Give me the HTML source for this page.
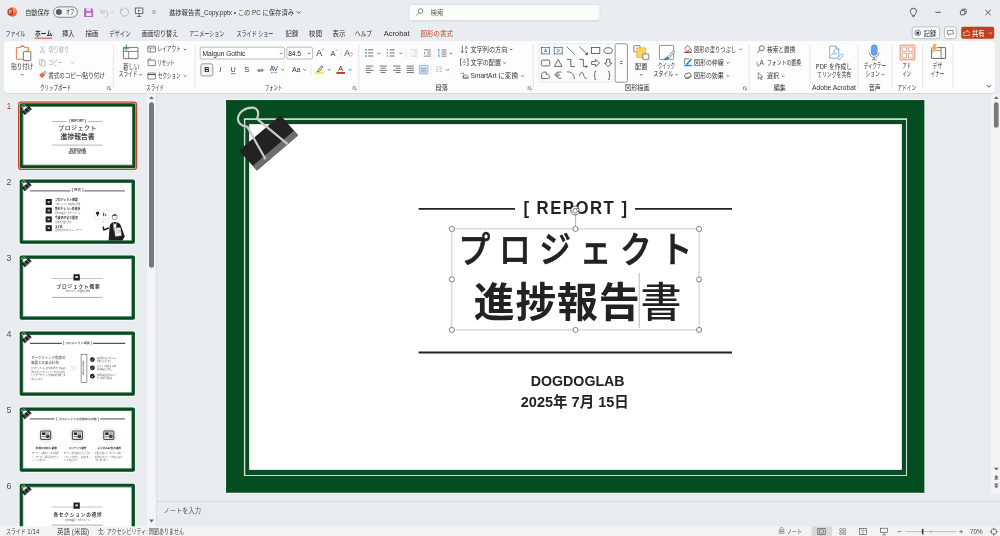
<!DOCTYPE html>
<html lang="ja"><head><meta charset="utf-8"><title>進捗報告書_Copy.pptx - PowerPoint</title>
<style>
html,body{margin:0;padding:0}
body{width:1000px;height:536px;overflow:hidden;position:relative;background:#e8ecef;font-family:"Liberation Sans", "Noto Sans CJK JP", sans-serif;}
.abs{position:absolute}
#titlebar{left:0;top:0;width:1000px;height:41px;background:#e9edf1}
#ribbon{left:4px;top:41px;width:991px;height:52px;background:#fdfdfe;border-radius:4px;box-shadow:0 1px 1px rgba(0,0,0,.07)}
#leftpane{left:0;top:94px;width:147px;height:432px;background:#e9edf0}
#leftscroll{left:147px;top:94px;width:10.4px;height:432px;background:#f3f4f6;border-right:0.6px solid #dde0e4;box-sizing:border-box}
#work{left:157.4px;top:94px;width:834px;height:408px;background:#e8ecef}
#rscroll{left:991.3px;top:94px;width:9px;height:400px;background:#f2f4f6}
#notes{left:157.4px;top:501.4px;width:843px;height:25px;background:#e8ebf0;border-top:1px solid #d6d8dc;box-sizing:border-box}
#status{left:0;top:526px;width:1000px;height:10px;background:#f3f3f3}
#slide{left:226px;top:100px;width:698px;height:393px;background:#054d20}
#paper{left:249.2px;top:123.7px;width:652.7px;height:345.85px;background:#fff;box-shadow:inset 0 0 1.6px rgba(0,0,0,.55)}
#frameline{left:243.9px;top:118.4px;width:663.1px;height:357.6px;border-style:solid;border-color:#d2d6d2;border-width:1.5px 1.1px 1.1px 1.4px;box-sizing:border-box}
svg text{font-family:"Liberation Sans", "Noto Sans CJK JP", sans-serif;}
</style></head><body>
<div class="abs" id="titlebar"></div>
<div class="abs" id="leftpane"></div>
<div class="abs" id="leftscroll"></div>
<div class="abs" id="work"></div>
<div class="abs" id="rscroll"></div>
<div class="abs" id="notes"></div>
<div class="abs" id="status"></div>
<div class="abs" id="ribbon"></div>
<div class="abs" id="slide"></div>
<div class="abs" id="paper"></div>
<svg class="abs" style="left:0;top:0;will-change:transform" width="1000" height="536" viewBox="0 0 1000 536">
<circle cx="12.30" cy="12.00" r="4.60" fill="#d35230" stroke="none" stroke-width="0.8"/>
<path d="M12.3 7.4 A4.6 4.6 0 0 1 16.9 12 L12.3 12 Z" fill="#ff8f6b" stroke="none" stroke-width="0.8" />
<path d="M12.3 16.6 A4.6 4.6 0 0 0 16.9 12 L12.3 12 Z" fill="#ed6c47" stroke="none" stroke-width="0.8" />
<rect x="7.60" y="9.40" width="5.40" height="5.40" fill="#c43e1c" stroke="none" stroke-width="0.8" rx="0.6" />
<text x="9.20" y="12.10" textLength="2.30" lengthAdjust="spacingAndGlyphs" font-size="4.6" fill="#fff" font-weight="700" dominant-baseline="central" >P</text>
<text x="25.20" y="12.00" textLength="24.40" lengthAdjust="spacingAndGlyphs" font-size="6.66" fill="#2f2f2f" font-weight="400" dominant-baseline="central" >自動保存</text>
<rect x="53.60" y="6.90" width="23.80" height="10.40" fill="#f4f5f7" stroke="#5a5a5a" stroke-width="0.7" rx="5.2" />
<circle cx="58.90" cy="12.10" r="3.00" fill="#5e5e5e" stroke="none" stroke-width="0.8"/>
<text x="65.80" y="11.90" textLength="8.60" lengthAdjust="spacingAndGlyphs" font-size="7.01" fill="#2f2f2f" font-weight="400" dominant-baseline="central" >オフ</text>
<path d="M84.6 8.3 h7.2 l1.3 1.3 v6.9 a0.6 0.6 0 0 1 -0.6 0.6 h-7.9 a0.6 0.6 0 0 1 -0.6 -0.6 v-7.6 a0.6 0.6 0 0 1 0.6 -0.6z" fill="#b86bc6" stroke="none" stroke-width="0.8" />
<rect x="86.40" y="8.30" width="4.40" height="2.60" fill="#f3e6f6" stroke="none" stroke-width="0.8" rx="0" />
<rect x="86.20" y="12.80" width="5.20" height="3.20" fill="#f3e6f6" stroke="none" stroke-width="0.8" rx="0" />
<path d="M101 9 v4 h4 M101 13 c2.2 -3.6 6.8 -2.8 6.8 1 c0 2.2 -1.6 3.2 -3.2 4" fill="none" stroke="#b4b7bb" stroke-width="0.9" />
<path d="M111.00 11.55 L112.30 12.85 L113.60 11.55" fill="none" stroke="#b4b7bb" stroke-width="0.75"/>
<path d="M121.4 9.4 a4.1 4.1 0 1 0 3 -1.4 M121.2 7.4 v2.2 h2.2" fill="none" stroke="#b0b3b7" stroke-width="0.9" />
<rect x="135.30" y="8.00" width="7.60" height="5.40" fill="none" stroke="#4a4a4a" stroke-width="0.8" rx="0" />
<line x1="139.10" y1="13.40" x2="139.10" y2="16.20" stroke="#4a4a4a" stroke-width="0.8" />
<line x1="136.90" y1="16.40" x2="141.30" y2="16.40" stroke="#4a4a4a" stroke-width="0.8" />
<path d="M138 9.5 l2.4 1.3 l-2.4 1.3z" fill="#2e8b57" stroke="none" stroke-width="0.8" />
<line x1="152.40" y1="10.80" x2="155.60" y2="10.80" stroke="#555" stroke-width="0.6" />
<path d="M152.70 12.25 L154.00 13.55 L155.30 12.25" fill="none" stroke="#3f3f3f" stroke-width="0.75"/>
<text x="169.00" y="12.10" textLength="125.00" lengthAdjust="spacingAndGlyphs" font-size="6.55" fill="#2f2f2f" font-weight="400" dominant-baseline="central" >進捗報告書_Copy.pptx • この PC に保存済み</text>
<path d="M296.70 11.40 L298.70 13.40 L300.70 11.40" fill="none" stroke="#3a3a3a" stroke-width="0.8"/>
<rect x="409.00" y="4.50" width="191.00" height="16.20" fill="#fbfcfc" stroke="#d6d9dd" stroke-width="0.7" rx="2.6" />
<line x1="411.00" y1="20.80" x2="598.00" y2="20.80" stroke="#c9ccd1" stroke-width="0.5" />
<circle cx="420.60" cy="11.00" r="2.30" fill="none" stroke="#4a4a4a" stroke-width="0.65"/>
<line x1="419.00" y1="12.80" x2="416.40" y2="15.60" stroke="#4a4a4a" stroke-width="0.65" />
<text x="430.60" y="12.30" textLength="13.00" lengthAdjust="spacingAndGlyphs" font-size="6.66" fill="#555" font-weight="400" dominant-baseline="central" >検索</text>
<path d="M910.3 11.3 a3.1 3.1 0 1 1 6.2 0 c0 1.6 -1.6 2.6 -2 4.4 h-2.2 c-0.4 -1.8 -2 -2.8 -2 -4.4z M912.5 16.6 h1.8" fill="none" stroke="#333" stroke-width="0.75" />
<line x1="935.40" y1="12.30" x2="940.80" y2="12.30" stroke="#333" stroke-width="0.8" />
<rect x="960.40" y="10.60" width="4.40" height="4.20" fill="none" stroke="#333" stroke-width="0.8" rx="1" />
<path d="M961.8 10.4 c0 -1 0.4 -1.2 1.2 -1.2 h2.2 c0.8 0 1 0.4 1 1.2 v2.2 c0 0.8 -0.4 1.2 -1.2 1.2" fill="none" stroke="#333" stroke-width="0.8" />
<line x1="985.40" y1="9.80" x2="990.80" y2="15.20" stroke="#333" stroke-width="0.8" />
<line x1="990.80" y1="9.80" x2="985.40" y2="15.20" stroke="#333" stroke-width="0.8" />
<text x="5.60" y="33.30" textLength="19.60" lengthAdjust="spacingAndGlyphs" font-size="7.34" fill="#2f2f2f" font-weight="400" dominant-baseline="central" >ファイル</text>
<text x="62.00" y="33.30" textLength="12.60" lengthAdjust="spacingAndGlyphs" font-size="6.76" fill="#2f2f2f" font-weight="400" dominant-baseline="central" >挿入</text>
<text x="85.60" y="33.30" textLength="13.00" lengthAdjust="spacingAndGlyphs" font-size="6.76" fill="#2f2f2f" font-weight="400" dominant-baseline="central" >描画</text>
<text x="109.20" y="33.30" textLength="21.40" lengthAdjust="spacingAndGlyphs" font-size="7.34" fill="#2f2f2f" font-weight="400" dominant-baseline="central" >デザイン</text>
<text x="141.80" y="33.30" textLength="36.20" lengthAdjust="spacingAndGlyphs" font-size="6.76" fill="#2f2f2f" font-weight="400" dominant-baseline="central" >画面切り替え</text>
<text x="189.20" y="33.30" textLength="35.00" lengthAdjust="spacingAndGlyphs" font-size="7.34" fill="#2f2f2f" font-weight="400" dominant-baseline="central" >アニメーション</text>
<text x="236.40" y="33.30" textLength="37.00" lengthAdjust="spacingAndGlyphs" font-size="7.34" fill="#2f2f2f" font-weight="400" dominant-baseline="central" >スライド ショー</text>
<text x="285.60" y="33.30" textLength="12.60" lengthAdjust="spacingAndGlyphs" font-size="6.76" fill="#2f2f2f" font-weight="400" dominant-baseline="central" >記録</text>
<text x="308.80" y="33.30" textLength="13.20" lengthAdjust="spacingAndGlyphs" font-size="6.76" fill="#2f2f2f" font-weight="400" dominant-baseline="central" >校閲</text>
<text x="332.60" y="33.30" textLength="13.00" lengthAdjust="spacingAndGlyphs" font-size="6.76" fill="#2f2f2f" font-weight="400" dominant-baseline="central" >表示</text>
<text x="355.00" y="33.30" textLength="17.00" lengthAdjust="spacingAndGlyphs" font-size="7.34" fill="#2f2f2f" font-weight="400" dominant-baseline="central" >ヘルプ</text>
<text x="383.80" y="33.30" textLength="25.80" lengthAdjust="spacingAndGlyphs" font-size="6.76" fill="#2f2f2f" font-weight="400" dominant-baseline="central" >Acrobat</text>
<text x="35.00" y="33.30" textLength="17.20" lengthAdjust="spacingAndGlyphs" font-size="7.34" fill="#222" font-weight="700" dominant-baseline="central" >ホーム</text>
<line x1="35.00" y1="38.20" x2="52.20" y2="38.20" stroke="#c43e1c" stroke-width="0.9" />
<text x="420.60" y="33.30" textLength="32.40" lengthAdjust="spacingAndGlyphs" font-size="6.76" fill="#c43e1c" font-weight="400" dominant-baseline="central" >図形の書式</text>
<rect x="912.20" y="26.90" width="27.40" height="11.80" fill="#fcfcfd" stroke="#9a9da1" stroke-width="0.6" rx="1.8" />
<circle cx="917.80" cy="32.90" r="2.80" fill="none" stroke="#3a3a3a" stroke-width="0.65"/>
<circle cx="917.80" cy="32.90" r="1.50" fill="#3a3a3a" stroke="none" stroke-width="0.8"/>
<text x="923.80" y="33.00" textLength="12.20" lengthAdjust="spacingAndGlyphs" font-size="6.55" fill="#222" font-weight="400" dominant-baseline="central" >記録</text>
<rect x="944.60" y="26.90" width="11.60" height="11.80" fill="#fcfcfd" stroke="#9a9da1" stroke-width="0.6" rx="1.8" />
<path d="M947.6 30.4 h5.6 v3.6 h-3.4 l-1.2 1.2 v-1.2 h-1z" fill="none" stroke="#444" stroke-width="0.6" />
<rect x="961.20" y="26.80" width="33.00" height="12.00" fill="#c43e1c" stroke="none" stroke-width="0.8" rx="2" />
<path d="M963.6 32.4 h1.6 l2.4 -2.2 v1.4 c1.4 0 2 0.6 2 1.6 M963.6 32.4 v3.2 h5.6 v-1.6" fill="none" stroke="#fff" stroke-width="0.6" />
<text x="972.00" y="33.00" textLength="12.60" lengthAdjust="spacingAndGlyphs" font-size="6.76" fill="#fff" font-weight="500" dominant-baseline="central" >共有</text>
<path d="M989.00 32.50 L990.40 33.90 L991.80 32.50" fill="none" stroke="#fff" stroke-width="0.75"/>
<line x1="113.30" y1="44.50" x2="113.30" y2="89.00" stroke="#d9dbde" stroke-width="0.7" />
<line x1="195.00" y1="44.50" x2="195.00" y2="89.00" stroke="#d9dbde" stroke-width="0.7" />
<line x1="358.80" y1="44.50" x2="358.80" y2="89.00" stroke="#d9dbde" stroke-width="0.7" />
<line x1="533.20" y1="44.50" x2="533.20" y2="89.00" stroke="#d9dbde" stroke-width="0.7" />
<line x1="749.20" y1="44.50" x2="749.20" y2="89.00" stroke="#d9dbde" stroke-width="0.7" />
<line x1="810.00" y1="44.50" x2="810.00" y2="89.00" stroke="#d9dbde" stroke-width="0.7" />
<line x1="858.00" y1="44.50" x2="858.00" y2="89.00" stroke="#d9dbde" stroke-width="0.7" />
<line x1="891.80" y1="44.50" x2="891.80" y2="89.00" stroke="#d9dbde" stroke-width="0.7" />
<line x1="922.60" y1="44.50" x2="922.60" y2="89.00" stroke="#d9dbde" stroke-width="0.7" />
<line x1="953.00" y1="44.50" x2="953.00" y2="89.00" stroke="#d9dbde" stroke-width="0.7" />
<path d="M16.4 47.6 h3.4 l1.2 -1.4 h3 l1.2 1.4 h3.2 v4 M16.4 47.6 v11.6 h6.4" fill="none" stroke="#e0703c" stroke-width="0.9" />
<path d="M20.4 47.8 l2.1 -2.4 l2.1 2.4" fill="none" stroke="#666" stroke-width="0.7" />
<rect x="23.40" y="51.60" width="7.40" height="9.00" fill="#fff" stroke="#555" stroke-width="0.8" rx="0.5" />
<line x1="26.80" y1="49.20" x2="26.80" y2="51.40" stroke="#f0c419" stroke-width="1" />
<text x="11.20" y="66.80" textLength="22.00" lengthAdjust="spacingAndGlyphs" font-size="6.55" fill="#2f2f2f" font-weight="400" dominant-baseline="central" >貼り付け</text>
<path d="M21.10 73.95 L22.40 75.25 L23.70 73.95" fill="none" stroke="#3f3f3f" stroke-width="0.75"/>
<path d="M40.6 46.4 l3.6 5.4 M44.4 46.4 l-3.6 5.4" fill="none" stroke="#a9a9a9" stroke-width="0.7" />
<circle cx="41.00" cy="52.40" r="0.80" fill="none" stroke="#a9a9a9" stroke-width="0.5"/>
<circle cx="44.00" cy="52.40" r="0.80" fill="none" stroke="#a9a9a9" stroke-width="0.5"/>
<text x="48.20" y="49.20" textLength="21.20" lengthAdjust="spacingAndGlyphs" font-size="6.55" fill="#a9a9a9" font-weight="400" dominant-baseline="central" >切り取り</text>
<rect x="39.40" y="59.60" width="3.60" height="5.40" fill="none" stroke="#a9a9a9" stroke-width="0.7" rx="0.4" />
<rect x="41.40" y="61.00" width="3.80" height="5.20" fill="#fdfdfe" stroke="#a9a9a9" stroke-width="0.7" rx="0.4" />
<text x="48.20" y="62.60" textLength="13.80" lengthAdjust="spacingAndGlyphs" font-size="7.12" fill="#a9a9a9" font-weight="400" dominant-baseline="central" >コピー</text>
<path d="M71.30 62.15 L72.60 63.45 L73.90 62.15" fill="none" stroke="#a9a9a9" stroke-width="0.75"/>
<path d="M39.6 74.2 l3 -1.6 l2.4 2.4 l-2 2.6 l-1.4 0.2 l-2 -2z" fill="#e0703c" stroke="none" stroke-width="0.8" />
<path d="M43 73 l2.2 -1.6 l1 1 l-1.6 2.2" fill="none" stroke="#555" stroke-width="0.7" />
<text x="48.20" y="75.80" textLength="56.60" lengthAdjust="spacingAndGlyphs" font-size="6.55" fill="#2f2f2f" font-weight="400" dominant-baseline="central" >書式のコピー/貼り付け</text>
<text x="40.20" y="87.70" textLength="31.00" lengthAdjust="spacingAndGlyphs" font-size="7.01" fill="#2f2f2f" font-weight="400" dominant-baseline="central" >クリップボード</text>
<path d="M107.8 87.0 h-0 M107.7 89.9 v-3 h3" fill="none" stroke="#4a4a4a" stroke-width="0.6" />
<path d="M109.0 88.2 l1.6 1.6 M110.7 88.5 v1.4 h-1.4" fill="none" stroke="#4a4a4a" stroke-width="0.6" />
<rect x="123.40" y="47.40" width="14.60" height="11.20" fill="none" stroke="#6a6a6a" stroke-width="0.9" rx="0.5" />
<line x1="123.40" y1="51.40" x2="138.00" y2="51.40" stroke="#6a6a6a" stroke-width="0.8" />
<line x1="128.60" y1="51.40" x2="128.60" y2="58.60" stroke="#6a6a6a" stroke-width="0.8" />
<line x1="126.30" y1="44.40" x2="126.30" y2="51.00" stroke="#2e8b57" stroke-width="0.9" />
<line x1="122.80" y1="48.20" x2="129.60" y2="48.20" stroke="#2e8b57" stroke-width="0.9" />
<text x="123.20" y="66.20" textLength="16.20" lengthAdjust="spacingAndGlyphs" font-size="6.55" fill="#2f2f2f" font-weight="400" dominant-baseline="central" >新しい</text>
<text x="118.80" y="74.20" textLength="18.60" lengthAdjust="spacingAndGlyphs" font-size="7.12" fill="#2f2f2f" font-weight="400" dominant-baseline="central" >スライド</text>
<path d="M139.30 73.95 L140.60 75.25 L141.90 73.95" fill="none" stroke="#3f3f3f" stroke-width="0.75"/>
<rect x="147.80" y="46.20" width="7.60" height="5.80" fill="none" stroke="#555" stroke-width="0.7" rx="0.3" />
<line x1="147.80" y1="48.00" x2="155.40" y2="48.00" stroke="#555" stroke-width="0.6" />
<line x1="150.40" y1="48.00" x2="150.40" y2="52.00" stroke="#555" stroke-width="0.6" />
<text x="157.60" y="49.20" textLength="23.20" lengthAdjust="spacingAndGlyphs" font-size="7.12" fill="#2f2f2f" font-weight="400" dominant-baseline="central" >レイアウト</text>
<path d="M183.70 48.75 L185.00 50.05 L186.30 48.75" fill="none" stroke="#3f3f3f" stroke-width="0.75"/>
<rect x="148.20" y="60.20" width="7.20" height="5.40" fill="none" stroke="#555" stroke-width="0.7" rx="0.3" />
<path d="M147.6 60.6 a2 2 0 0 1 2.6 -1.6 M150.4 58 v1.2 h-1.2" fill="none" stroke="#2b7cd3" stroke-width="0.6" />
<text x="157.60" y="62.60" textLength="17.00" lengthAdjust="spacingAndGlyphs" font-size="7.12" fill="#2f2f2f" font-weight="400" dominant-baseline="central" >リセット</text>
<rect x="147.80" y="73.00" width="7.60" height="6.00" fill="none" stroke="#555" stroke-width="0.7" rx="0.3" />
<line x1="147.80" y1="74.60" x2="155.40" y2="74.60" stroke="#555" stroke-width="1.1" />
<text x="158.00" y="75.80" textLength="22.40" lengthAdjust="spacingAndGlyphs" font-size="7.12" fill="#2f2f2f" font-weight="400" dominant-baseline="central" >セクション</text>
<path d="M183.70 75.35 L185.00 76.65 L186.30 75.35" fill="none" stroke="#3f3f3f" stroke-width="0.75"/>
<text x="146.20" y="87.70" textLength="17.80" lengthAdjust="spacingAndGlyphs" font-size="7.01" fill="#2f2f2f" font-weight="400" dominant-baseline="central" >スライド</text>
<rect x="200.20" y="47.20" width="84.40" height="11.80" fill="#fff" stroke="#8c8f94" stroke-width="0.6" rx="1.6" />
<text x="202.60" y="53.20" textLength="42.80" lengthAdjust="spacingAndGlyphs" font-size="6.55" fill="#222" font-weight="400" dominant-baseline="central" >Malgun Gothic</text>
<path d="M279.90 52.75 L281.20 54.05 L282.50 52.75" fill="none" stroke="#444" stroke-width="0.75"/>
<rect x="286.80" y="47.20" width="25.80" height="11.80" fill="#fff" stroke="#8c8f94" stroke-width="0.6" rx="1.6" />
<text x="288.20" y="53.20" textLength="12.80" lengthAdjust="spacingAndGlyphs" font-size="6.55" fill="#222" font-weight="400" dominant-baseline="central" >84.5</text>
<path d="M307.70 52.75 L309.00 54.05 L310.30 52.75" fill="none" stroke="#444" stroke-width="0.75"/>
<text x="319.20" y="52.90" text-anchor="middle" font-size="8.8" fill="#3a3a3a" font-weight="400" dominant-baseline="central" >A</text>
<path d="M321.8 49.9 l1 -1 l1 1" fill="none" stroke="#2b7cd3" stroke-width="0.6" />
<text x="333.00" y="53.50" text-anchor="middle" font-size="7.4" fill="#3a3a3a" font-weight="400" dominant-baseline="central" >A</text>
<path d="M335.2 49.6 l1 1 l1 -1" fill="none" stroke="#2b7cd3" stroke-width="0.6" />
<line x1="341.00" y1="48.40" x2="341.00" y2="58.00" stroke="#d9dbde" stroke-width="0.6" />
<text x="347.00" y="52.90" text-anchor="middle" font-size="8.6" fill="#3a3a3a" font-weight="400" dominant-baseline="central" >A</text>
<path d="M348.6 54.8 l2.2 -2.4 l1.9 1.7 l-2.2 2.4z" fill="#fff" stroke="#c45bd0" stroke-width="0.6" />
<rect x="200.80" y="63.80" width="12.00" height="12.20" fill="#f1f1f2" stroke="#6f7276" stroke-width="0.7" rx="2" />
<text x="206.80" y="69.70" text-anchor="middle" font-size="7.3" fill="#222" font-weight="700" dominant-baseline="central" >B</text>
<text x="220.20" y="69.60" text-anchor="middle" font-size="7.6" fill="#333" font-weight="400" dominant-baseline="central" font-style="italic" font-family="Liberation Serif, serif">I</text>
<text x="233.20" y="69.20" text-anchor="middle" font-size="6.9" fill="#333" font-weight="400" dominant-baseline="central" >U</text>
<line x1="231.00" y1="73.60" x2="235.40" y2="73.60" stroke="#333" stroke-width="0.6" />
<text x="246.60" y="69.60" text-anchor="middle" font-size="7.4" fill="#333" font-weight="400" dominant-baseline="central" >S</text>
<text x="260.40" y="69.90" text-anchor="middle" font-size="5.4" fill="#555" font-weight="400" dominant-baseline="central" >ab</text>
<line x1="256.60" y1="70.20" x2="264.20" y2="70.20" stroke="#555" stroke-width="0.5" />
<text x="273.80" y="68.20" text-anchor="middle" font-size="6.6" fill="#333" font-weight="400" dominant-baseline="central" >AV</text>
<path d="M270.8 72.6 h6 M270.8 72.6 l0.9 -0.8 M270.8 72.6 l0.9 0.8 M276.8 72.6 l-0.9 -0.8 M276.8 72.6 l-0.9 0.8" fill="none" stroke="#2b7cd3" stroke-width="0.5" />
<path d="M281.30 69.15 L282.60 70.45 L283.90 69.15" fill="none" stroke="#3f3f3f" stroke-width="0.75"/>
<text x="296.20" y="69.60" text-anchor="middle" font-size="7" fill="#333" font-weight="400" dominant-baseline="central" >Aa</text>
<path d="M303.30 69.15 L304.60 70.45 L305.90 69.15" fill="none" stroke="#3f3f3f" stroke-width="0.75"/>
<line x1="311.20" y1="65.00" x2="311.20" y2="75.00" stroke="#d9dbde" stroke-width="0.6" />
<path d="M317.8 70.6 l3.8 -4.8 l1.3 1 l-3.7 4.8 l-1.9 0.5z" fill="none" stroke="#333" stroke-width="0.7" />
<rect x="315.00" y="71.90" width="8.80" height="2.00" fill="#ffe83b" stroke="none" stroke-width="0.8" rx="0" />
<path d="M327.90 69.15 L329.20 70.45 L330.50 69.15" fill="none" stroke="#3f3f3f" stroke-width="0.75"/>
<text x="340.80" y="68.20" text-anchor="middle" font-size="7.4" fill="#333" font-weight="400" dominant-baseline="central" >A</text>
<rect x="336.40" y="71.90" width="8.60" height="2.00" fill="#c8391f" stroke="none" stroke-width="0.8" rx="0" />
<path d="M348.90 69.15 L350.20 70.45 L351.50 69.15" fill="none" stroke="#3f3f3f" stroke-width="0.75"/>
<text x="265.00" y="87.70" textLength="17.00" lengthAdjust="spacingAndGlyphs" font-size="7.01" fill="#2f2f2f" font-weight="400" dominant-baseline="central" >フォント</text>
<path d="M353.20000000000005 87.0 h-0 M353.1 89.9 v-3 h3" fill="none" stroke="#4a4a4a" stroke-width="0.6" />
<path d="M354.40000000000003 88.2 l1.6 1.6 M356.1 88.5 v1.4 h-1.4" fill="none" stroke="#4a4a4a" stroke-width="0.6" />
<rect x="365.20" y="49.15" width="1.50" height="1.50" fill="#2b7cd3" stroke="none" stroke-width="0.8" rx="0" />
<line x1="368.20" y1="49.90" x2="373.20" y2="49.90" stroke="#6a6a6a" stroke-width="1.0" />
<rect x="365.20" y="52.20" width="1.50" height="1.50" fill="#2b7cd3" stroke="none" stroke-width="0.8" rx="0" />
<line x1="368.20" y1="52.95" x2="373.20" y2="52.95" stroke="#6a6a6a" stroke-width="1.0" />
<rect x="365.20" y="55.25" width="1.50" height="1.50" fill="#2b7cd3" stroke="none" stroke-width="0.8" rx="0" />
<line x1="368.20" y1="56.00" x2="373.20" y2="56.00" stroke="#6a6a6a" stroke-width="1.0" />
<path d="M377.50 52.75 L378.80 54.05 L380.10 52.75" fill="none" stroke="#3f3f3f" stroke-width="0.75"/>
<line x1="387.40" y1="49.00" x2="387.40" y2="50.80" stroke="#2b7cd3" stroke-width="0.7" />
<line x1="389.60" y1="49.90" x2="394.60" y2="49.90" stroke="#6a6a6a" stroke-width="1.0" />
<line x1="387.40" y1="52.05" x2="387.40" y2="53.85" stroke="#2b7cd3" stroke-width="0.7" />
<line x1="389.60" y1="52.95" x2="394.60" y2="52.95" stroke="#6a6a6a" stroke-width="1.0" />
<line x1="387.40" y1="55.10" x2="387.40" y2="56.90" stroke="#2b7cd3" stroke-width="0.7" />
<line x1="389.60" y1="56.00" x2="394.60" y2="56.00" stroke="#6a6a6a" stroke-width="1.0" />
<path d="M399.30 52.75 L400.60 54.05 L401.90 52.75" fill="none" stroke="#3f3f3f" stroke-width="0.75"/>
<line x1="406.00" y1="48.40" x2="406.00" y2="58.00" stroke="#d9dbde" stroke-width="0.6" />
<line x1="410.50" y1="49.85" x2="417.50" y2="49.85" stroke="#c2c2c2" stroke-width="0.7" />
<line x1="413.90" y1="51.95" x2="417.50" y2="51.95" stroke="#c2c2c2" stroke-width="0.7" />
<line x1="413.90" y1="54.05" x2="417.50" y2="54.05" stroke="#c2c2c2" stroke-width="0.7" />
<line x1="410.50" y1="56.15" x2="417.50" y2="56.15" stroke="#c2c2c2" stroke-width="0.7" />
<path d="M410.4 52 l1.2 1 l-1.2 1" fill="none" stroke="#c2c2c2" stroke-width="0.5" />
<line x1="423.90" y1="49.85" x2="430.90" y2="49.85" stroke="#555" stroke-width="0.7" />
<line x1="427.30" y1="51.95" x2="430.90" y2="51.95" stroke="#555" stroke-width="0.7" />
<line x1="427.30" y1="54.05" x2="430.90" y2="54.05" stroke="#555" stroke-width="0.7" />
<line x1="423.90" y1="56.15" x2="430.90" y2="56.15" stroke="#555" stroke-width="0.7" />
<path d="M424 51.8 l1.4 1.2 l-1.4 1.2z" fill="#2b7cd3" stroke="none" stroke-width="0.8" />
<line x1="434.40" y1="48.40" x2="434.40" y2="58.00" stroke="#d9dbde" stroke-width="0.6" />
<line x1="441.60" y1="49.85" x2="446.60" y2="49.85" stroke="#4a4a4a" stroke-width="0.7" />
<line x1="441.60" y1="51.95" x2="446.60" y2="51.95" stroke="#4a4a4a" stroke-width="0.7" />
<line x1="441.60" y1="54.05" x2="446.60" y2="54.05" stroke="#4a4a4a" stroke-width="0.7" />
<line x1="441.60" y1="56.15" x2="446.60" y2="56.15" stroke="#4a4a4a" stroke-width="0.7" />
<path d="M438.8 49.4 v7.2 M437.8 50.6 l1 -1.2 l1 1.2 M437.8 55.4 l1 1.2 l1 -1.2" fill="none" stroke="#2b7cd3" stroke-width="0.6" />
<path d="M449.70 52.75 L451.00 54.05 L452.30 52.75" fill="none" stroke="#3f3f3f" stroke-width="0.75"/>
<line x1="365.90" y1="66.08" x2="373.30" y2="66.08" stroke="#4a4a4a" stroke-width="0.75" />
<line x1="365.90" y1="68.23" x2="370.70" y2="68.23" stroke="#4a4a4a" stroke-width="0.75" />
<line x1="365.90" y1="70.38" x2="373.30" y2="70.38" stroke="#4a4a4a" stroke-width="0.75" />
<line x1="365.90" y1="72.53" x2="370.70" y2="72.53" stroke="#4a4a4a" stroke-width="0.75" />
<line x1="379.50" y1="66.08" x2="386.90" y2="66.08" stroke="#4a4a4a" stroke-width="0.75" />
<line x1="380.80" y1="68.23" x2="385.60" y2="68.23" stroke="#4a4a4a" stroke-width="0.75" />
<line x1="379.50" y1="70.38" x2="386.90" y2="70.38" stroke="#4a4a4a" stroke-width="0.75" />
<line x1="380.80" y1="72.53" x2="385.60" y2="72.53" stroke="#4a4a4a" stroke-width="0.75" />
<line x1="393.10" y1="66.08" x2="400.50" y2="66.08" stroke="#4a4a4a" stroke-width="0.75" />
<line x1="395.70" y1="68.23" x2="400.50" y2="68.23" stroke="#4a4a4a" stroke-width="0.75" />
<line x1="393.10" y1="70.38" x2="400.50" y2="70.38" stroke="#4a4a4a" stroke-width="0.75" />
<line x1="395.70" y1="72.53" x2="400.50" y2="72.53" stroke="#4a4a4a" stroke-width="0.75" />
<line x1="406.50" y1="66.08" x2="413.90" y2="66.08" stroke="#4a4a4a" stroke-width="0.75" />
<line x1="406.50" y1="68.23" x2="413.90" y2="68.23" stroke="#4a4a4a" stroke-width="0.75" />
<line x1="406.50" y1="70.38" x2="413.90" y2="70.38" stroke="#4a4a4a" stroke-width="0.75" />
<line x1="406.50" y1="72.53" x2="413.90" y2="72.53" stroke="#4a4a4a" stroke-width="0.75" />
<rect x="419.30" y="65.40" width="8.60" height="8.60" fill="#e4eefa" stroke="#4a90d9" stroke-width="0.6" rx="0.6" />
<line x1="420.60" y1="68.10" x2="426.60" y2="68.10" stroke="#67727d" stroke-width="0.7" />
<line x1="420.60" y1="70.00" x2="426.60" y2="70.00" stroke="#67727d" stroke-width="0.7" />
<line x1="420.60" y1="71.90" x2="426.60" y2="71.90" stroke="#67727d" stroke-width="0.7" />
<line x1="431.00" y1="65.00" x2="431.00" y2="75.00" stroke="#d9dbde" stroke-width="0.6" />
<line x1="435.90" y1="67.20" x2="438.50" y2="67.20" stroke="#a8a8a8" stroke-width="0.7" />
<line x1="435.90" y1="69.30" x2="438.50" y2="69.30" stroke="#a8a8a8" stroke-width="0.7" />
<line x1="435.90" y1="71.40" x2="438.50" y2="71.40" stroke="#a8a8a8" stroke-width="0.7" />
<line x1="439.50" y1="67.20" x2="442.10" y2="67.20" stroke="#a8a8a8" stroke-width="0.7" />
<line x1="439.50" y1="69.30" x2="442.10" y2="69.30" stroke="#a8a8a8" stroke-width="0.7" />
<line x1="439.50" y1="71.40" x2="442.10" y2="71.40" stroke="#a8a8a8" stroke-width="0.7" />
<path d="M446.30 69.15 L447.60 70.45 L448.90 69.15" fill="none" stroke="#3f3f3f" stroke-width="0.75"/>
<path d="M462.3 45.6 v7 M461 51.2 l1.3 1.5 l1.3 -1.5" fill="none" stroke="#3a3a3a" stroke-width="0.7" />
<text x="466.20" y="47.80" text-anchor="middle" font-size="4.4" fill="#2b7cd3" font-weight="400" dominant-baseline="central" >A</text>
<path d="M466.2 50 v2.8 M465.2 51.8 l1 1.1 l1 -1.1" fill="none" stroke="#3a3a3a" stroke-width="0.6" />
<text x="470.60" y="49.20" textLength="36.80" lengthAdjust="spacingAndGlyphs" font-size="6.55" fill="#2f2f2f" font-weight="400" dominant-baseline="central" >文字列の方向</text>
<path d="M509.70 48.75 L511.00 50.05 L512.30 48.75" fill="none" stroke="#3f3f3f" stroke-width="0.75"/>
<path d="M461.8 58.8 h-1.3 v6.6 h1.3 M466.8 58.8 h1.3 v6.6 h-1.3" fill="none" stroke="#3a3a3a" stroke-width="0.7" />
<path d="M462.6 62.1 h3.4" fill="none" stroke="#3a3a3a" stroke-width="0.6" />
<path d="M463.5 60.2 l0.8 -0.9 l0.8 0.9z M463.5 64 l0.8 0.9 l0.8 -0.9z" fill="#2b7cd3" stroke="#2b7cd3" stroke-width="0.3" />
<text x="470.60" y="62.60" textLength="30.40" lengthAdjust="spacingAndGlyphs" font-size="6.55" fill="#2f2f2f" font-weight="400" dominant-baseline="central" >文字の配置</text>
<path d="M503.30 62.15 L504.60 63.45 L505.90 62.15" fill="none" stroke="#3f3f3f" stroke-width="0.75"/>
<path d="M460.4 73.4 h3.4 l-1 -0.9 M463.8 73.4 l-1 0.9" fill="none" stroke="#2e8b57" stroke-width="0.6" />
<path d="M463.4 75 h3.2 l1.6 1.6 v1.8 h-4.8z M462 77 h1.4" fill="none" stroke="#3a3a3a" stroke-width="0.6" />
<line x1="463.60" y1="77.20" x2="468.00" y2="77.20" stroke="#3a3a3a" stroke-width="0.5" />
<text x="470.60" y="75.80" textLength="47.40" lengthAdjust="spacingAndGlyphs" font-size="6.55" fill="#2f2f2f" font-weight="400" dominant-baseline="central" >SmartArt に変換</text>
<path d="M521.10 75.35 L522.40 76.65 L523.70 75.35" fill="none" stroke="#3f3f3f" stroke-width="0.75"/>
<text x="435.60" y="87.70" textLength="12.40" lengthAdjust="spacingAndGlyphs" font-size="6.45" fill="#2f2f2f" font-weight="400" dominant-baseline="central" >段落</text>
<path d="M528.2 87.0 h-0 M528.1 89.9 v-3 h3" fill="none" stroke="#4a4a4a" stroke-width="0.6" />
<path d="M529.4 88.2 l1.6 1.6 M531.1 88.5 v1.4 h-1.4" fill="none" stroke="#4a4a4a" stroke-width="0.6" />
<rect x="538.80" y="43.80" width="88.60" height="38.20" fill="#fafbfc" stroke="#d5dbe3" stroke-width="0.6" rx="1.8" />
<rect x="615.20" y="43.80" width="12.20" height="38.40" fill="#fdfdfe" stroke="#6d7074" stroke-width="0.7" rx="1.8" />
<line x1="619.60" y1="61.40" x2="623.00" y2="61.40" stroke="#444" stroke-width="0.6" />
<path d="M619.9 63 h2.8 l-1.4 1.5z" fill="#444" stroke="none" stroke-width="0.8" />
<rect x="541.60" y="47.30" width="8.00" height="6.60" fill="none" stroke="#3c3c3c" stroke-width="0.6" rx="0" />
<text x="545.60" y="50.70" text-anchor="middle" font-size="4.4" fill="#2b7cd3" font-weight="700" dominant-baseline="central" >A</text>
<rect x="554.20" y="47.30" width="8.00" height="6.60" fill="none" stroke="#3c3c3c" stroke-width="0.6" rx="0" />
<path d="M556.8000000000001 48.9 l3 1.7 l-3 1.7" fill="none" stroke="#2b7cd3" stroke-width="0.8" />
<rect x="541.10" y="46.80" width="1.00" height="1.00" fill="#2b7cd3" stroke="none" stroke-width="0.8" rx="0" />
<rect x="541.10" y="53.40" width="1.00" height="1.00" fill="#2b7cd3" stroke="none" stroke-width="0.8" rx="0" />
<rect x="549.10" y="46.80" width="1.00" height="1.00" fill="#2b7cd3" stroke="none" stroke-width="0.8" rx="0" />
<rect x="549.10" y="53.40" width="1.00" height="1.00" fill="#2b7cd3" stroke="none" stroke-width="0.8" rx="0" />
<rect x="553.70" y="46.80" width="1.00" height="1.00" fill="#2b7cd3" stroke="none" stroke-width="0.8" rx="0" />
<rect x="553.70" y="53.40" width="1.00" height="1.00" fill="#2b7cd3" stroke="none" stroke-width="0.8" rx="0" />
<rect x="561.70" y="46.80" width="1.00" height="1.00" fill="#2b7cd3" stroke="none" stroke-width="0.8" rx="0" />
<rect x="561.70" y="53.40" width="1.00" height="1.00" fill="#2b7cd3" stroke="none" stroke-width="0.8" rx="0" />
<line x1="566.80" y1="46.70" x2="574.80" y2="54.50" stroke="#3c3c3c" stroke-width="0.75" />
<line x1="579.40" y1="46.70" x2="587.40" y2="54.50" stroke="#3c3c3c" stroke-width="0.75" />
<path d="M587.6 52.2 v2.5 h-2.5z" fill="#3c3c3c" stroke="#3c3c3c" stroke-width="0.3" />
<rect x="591.40" y="47.60" width="8.40" height="6.00" fill="none" stroke="#3c3c3c" stroke-width="0.75" rx="0" />
<ellipse cx="608.2" cy="50.6" rx="4.2" ry="2.9" fill="none" stroke="#3c3c3c" stroke-width="0.75"/>
<rect x="541.40" y="60.10" width="8.40" height="5.80" fill="none" stroke="#3c3c3c" stroke-width="0.75" rx="1.3" />
<path d="M558.2 59.4 l3.8 7 h-7.6z" fill="none" stroke="#3c3c3c" stroke-width="0.75" />
<path d="M566.8 59.4 h4 v7.2 h4" fill="none" stroke="#3c3c3c" stroke-width="0.75" />
<path d="M579.4 59.4 h4 v7.2 h3.4" fill="none" stroke="#3c3c3c" stroke-width="0.75" />
<path d="M587.8 66.6 l-2 -1.3 v2.6z" fill="#3c3c3c" stroke="none" stroke-width="0.8" />
<path d="M591.6 61.5 h4 v-2 l4 3.5 l-4 3.5 v-2 h-4z" fill="none" stroke="#3c3c3c" stroke-width="0.75" />
<path d="M606.6 59.1 v3.9 h-2 l3.6 3.9 l3.6 -3.9 h-2 v-3.9z" fill="none" stroke="#3c3c3c" stroke-width="0.75" />
<path d="M541.6 78.60000000000001 v-3.6 c0 -2 1.6 -3 3.2 -3 h1.4 v2.4 c1.8 0 3.2 0.4 3.2 2 c0 1.4 -0.8 2.2 -2 2.2z" fill="none" stroke="#3c3c3c" stroke-width="0.75" />
<path d="M561.4000000000001 72.2 c-4.4 -1 -8 2.2 -5.4 3.8 c2.4 1.2 4.4 -1.8 2 -2.2 c-2.6 0 -1.4 5.4 3.6 4.4" fill="none" stroke="#3c3c3c" stroke-width="0.75" />
<path d="M567.0 71.80000000000001 c5 0 7.4 2.6 7.4 7.4" fill="none" stroke="#3c3c3c" stroke-width="0.75" />
<path d="M579.4 76.4 c1.8 -5.4 3.2 -5.4 4.4 -1 c0.8 3.2 2 3.6 3.4 2.6" fill="none" stroke="#3c3c3c" stroke-width="0.75" />
<text x="595.00" y="75.20" text-anchor="middle" font-size="8.6" fill="#3c3c3c" font-weight="400" dominant-baseline="central" >{</text>
<text x="609.20" y="75.20" text-anchor="middle" font-size="8.6" fill="#3c3c3c" font-weight="400" dominant-baseline="central" >}</text>
<rect x="633.80" y="45.60" width="6.20" height="6.20" fill="#fdfdfe" stroke="#555" stroke-width="0.7" rx="0.4" />
<rect x="636.60" y="47.80" width="9.20" height="9.80" fill="#fbd65a" stroke="#ee9a4a" stroke-width="0.6" rx="0.4" />
<rect x="642.80" y="54.00" width="6.00" height="5.40" fill="#fdfdfe" stroke="#555" stroke-width="0.7" rx="0.4" />
<text x="635.00" y="66.20" textLength="12.40" lengthAdjust="spacingAndGlyphs" font-size="6.55" fill="#2f2f2f" font-weight="400" dominant-baseline="central" >配置</text>
<path d="M639.90 73.95 L641.20 75.25 L642.50 73.95" fill="none" stroke="#3f3f3f" stroke-width="0.75"/>
<rect x="659.40" y="45.40" width="14.20" height="14.00" fill="#fdfdfe" stroke="#666" stroke-width="0.7" rx="0.6" />
<path d="M673.6 50.4 l1.3 1.1 l-6 7 l-1.6 -1.3z" fill="#fdfdfe" stroke="#444" stroke-width="0.6" />
<ellipse cx="666.4" cy="58.6" rx="2.5" ry="1.3" transform="rotate(-28 666.4 58.6)" fill="#2b7cd3"/>
<text x="658.00" y="66.20" textLength="17.00" lengthAdjust="spacingAndGlyphs" font-size="7.12" fill="#2f2f2f" font-weight="400" dominant-baseline="central" >クイック</text>
<text x="653.60" y="74.20" textLength="19.40" lengthAdjust="spacingAndGlyphs" font-size="7.12" fill="#2f2f2f" font-weight="400" dominant-baseline="central" >スタイル</text>
<path d="M675.30 73.95 L676.60 75.25 L677.90 73.95" fill="none" stroke="#3f3f3f" stroke-width="0.75"/>
<path d="M687.6 45.4 l3 3 l-3 3 l-3 -3z M690.6 48.6 c0.9 1 1.1 1.9 0.3 2.4" fill="none" stroke="#3c3c3c" stroke-width="0.65" />
<rect x="684.20" y="51.50" width="7.40" height="1.50" fill="#c8391f" stroke="none" stroke-width="0.8" rx="0" />
<text x="694.00" y="49.20" textLength="42.00" lengthAdjust="spacingAndGlyphs" font-size="6.55" fill="#2f2f2f" font-weight="400" dominant-baseline="central" >図形の塗りつぶし</text>
<path d="M739.30 48.75 L740.60 50.05 L741.90 48.75" fill="none" stroke="#3f3f3f" stroke-width="0.75"/>
<path d="M684.6 64 v-5.2 h4.4" fill="none" stroke="#3c3c3c" stroke-width="0.65" />
<path d="M686.4 63.6 l4.4 -5.2 l1.2 1 l-4.4 5.2 l-1.6 0.4z" fill="#2b7cd3" stroke="none" stroke-width="0.8" />
<rect x="684.20" y="64.80" width="7.40" height="1.40" fill="#2b7cd3" stroke="none" stroke-width="0.8" rx="0" />
<text x="694.00" y="62.60" textLength="29.80" lengthAdjust="spacingAndGlyphs" font-size="6.55" fill="#2f2f2f" font-weight="400" dominant-baseline="central" >図形の枠線</text>
<path d="M726.70 62.15 L728.00 63.45 L729.30 62.15" fill="none" stroke="#3f3f3f" stroke-width="0.75"/>
<rect x="684.6" y="73.4" width="6.4" height="4" rx="1.8" transform="rotate(-22 687.8 75.4)" fill="#fdfdfe" stroke="#3c3c3c" stroke-width="0.7"/>
<path d="M685 77.8 c1.8 1.4 4.8 0.6 6.4 -1.8" fill="none" stroke="#555" stroke-width="0.9" />
<text x="694.00" y="75.80" textLength="29.80" lengthAdjust="spacingAndGlyphs" font-size="6.55" fill="#2f2f2f" font-weight="400" dominant-baseline="central" >図形の効果</text>
<path d="M726.70 75.35 L728.00 76.65 L729.30 75.35" fill="none" stroke="#3f3f3f" stroke-width="0.75"/>
<text x="625.00" y="87.70" textLength="24.60" lengthAdjust="spacingAndGlyphs" font-size="6.45" fill="#2f2f2f" font-weight="400" dominant-baseline="central" >図形描画</text>
<path d="M743.6 87.0 h-0 M743.5 89.9 v-3 h3" fill="none" stroke="#4a4a4a" stroke-width="0.6" />
<path d="M744.8 88.2 l1.6 1.6 M746.5 88.5 v1.4 h-1.4" fill="none" stroke="#4a4a4a" stroke-width="0.6" />
<circle cx="761.80" cy="48.20" r="2.50" fill="none" stroke="#3c3c3c" stroke-width="0.7"/>
<line x1="760.00" y1="50.00" x2="757.00" y2="53.20" stroke="#3c3c3c" stroke-width="0.7" />
<text x="767.00" y="49.20" textLength="28.40" lengthAdjust="spacingAndGlyphs" font-size="6.55" fill="#2f2f2f" font-weight="400" dominant-baseline="central" >検索と置換</text>
<path d="M758.6 65.8 a2.3 2.3 0 0 1 -0.6 -4.2 M758.8 64.6 v1.4 h-1.4" fill="none" stroke="#2b7cd3" stroke-width="0.7" />
<text x="761.60" y="62.60" text-anchor="middle" font-size="6.6" fill="#3c3c3c" font-weight="400" dominant-baseline="central" >A</text>
<text x="767.00" y="62.60" textLength="34.00" lengthAdjust="spacingAndGlyphs" font-size="6.55" fill="#2f2f2f" font-weight="400" dominant-baseline="central" >フォントの置換</text>
<path d="M758.2 72.6 v6.4 l1.6 -1.6 l1.2 2.4 l0.9 -0.4 l-1.2 -2.4 h2.2z" fill="none" stroke="#444" stroke-width="0.6" />
<text x="767.00" y="75.80" textLength="11.80" lengthAdjust="spacingAndGlyphs" font-size="6.55" fill="#2f2f2f" font-weight="400" dominant-baseline="central" >選択</text>
<path d="M781.70 75.35 L783.00 76.65 L784.30 75.35" fill="none" stroke="#3f3f3f" stroke-width="0.75"/>
<text x="773.80" y="87.70" textLength="12.00" lengthAdjust="spacingAndGlyphs" font-size="6.45" fill="#2f2f2f" font-weight="400" dominant-baseline="central" >編集</text>
<path d="M829.6 46.2 h6.2 l3 3 v9 h-9.2z M835.8 46.2 v3 h3" fill="none" stroke="#4a90d9" stroke-width="0.7" />
<path d="M831.4 55 c2 -1 3 -3.6 2.8 -5 c-0.8 -0.2 -0.4 2.4 2.6 3.8 c-1.6 -0.2 -4 0.4 -5.4 1.2z" fill="none" stroke="#4a90d9" stroke-width="0.5" />
<path d="M838 57.4 l3 -3 a1.3 1.3 0 0 1 1.9 1.9 l-3 3 a1.3 1.3 0 0 1 -1.9 -1.9z" fill="#fdfdfe" stroke="#4a90d9" stroke-width="0.6" />
<text x="815.80" y="66.20" textLength="36.20" lengthAdjust="spacingAndGlyphs" font-size="6.55" fill="#2f2f2f" font-weight="400" dominant-baseline="central" >PDF を作成し</text>
<text x="817.00" y="74.20" textLength="34.20" lengthAdjust="spacingAndGlyphs" font-size="6.55" fill="#2f2f2f" font-weight="400" dominant-baseline="central" >てリンクを共有</text>
<text x="812.00" y="87.70" textLength="43.80" lengthAdjust="spacingAndGlyphs" font-size="7.07" fill="#2f2f2f" font-weight="400" dominant-baseline="central" >Adobe Acrobat</text>
<rect x="871.20" y="44.80" width="6.00" height="10.60" fill="#62a3ea" stroke="#3f7fc8" stroke-width="0.5" rx="3" />
<path d="M869.4 52.6 a4.8 4.8 0 0 0 9.6 0 M874.2 57.4 v2.2 M872 59.8 h4.4" fill="none" stroke="#555" stroke-width="0.7" />
<text x="863.80" y="66.20" textLength="22.20" lengthAdjust="spacingAndGlyphs" font-size="7.12" fill="#2f2f2f" font-weight="400" dominant-baseline="central" >ディクテー</text>
<text x="865.60" y="74.20" textLength="14.20" lengthAdjust="spacingAndGlyphs" font-size="7.12" fill="#2f2f2f" font-weight="400" dominant-baseline="central" >ション</text>
<path d="M881.70 73.95 L883.00 75.25 L884.30 73.95" fill="none" stroke="#3f3f3f" stroke-width="0.75"/>
<text x="868.80" y="87.70" textLength="12.00" lengthAdjust="spacingAndGlyphs" font-size="6.45" fill="#2f2f2f" font-weight="400" dominant-baseline="central" >音声</text>
<rect x="902.00" y="47.00" width="4.60" height="4.60" fill="none" stroke="#d9693f" stroke-width="0.6" rx="0.2" />
<rect x="908.40" y="47.00" width="4.60" height="4.60" fill="none" stroke="#d9693f" stroke-width="0.6" rx="0.2" />
<rect x="902.00" y="53.40" width="4.60" height="4.60" fill="none" stroke="#d9693f" stroke-width="0.6" rx="0.2" />
<rect x="908.40" y="53.40" width="4.60" height="4.60" fill="none" stroke="#d9693f" stroke-width="0.6" rx="0.2" />
<rect x="900.20" y="45.20" width="14.60" height="14.60" fill="none" stroke="#d9693f" stroke-width="0.8" rx="0.3" />
<text x="902.60" y="66.20" textLength="8.40" lengthAdjust="spacingAndGlyphs" font-size="7.12" fill="#2f2f2f" font-weight="400" dominant-baseline="central" >アド</text>
<text x="902.60" y="74.20" textLength="8.40" lengthAdjust="spacingAndGlyphs" font-size="7.12" fill="#2f2f2f" font-weight="400" dominant-baseline="central" >イン</text>
<text x="897.60" y="87.70" textLength="18.40" lengthAdjust="spacingAndGlyphs" font-size="7.01" fill="#2f2f2f" font-weight="400" dominant-baseline="central" >アドイン</text>
<rect x="931.60" y="47.60" width="14.00" height="10.80" fill="none" stroke="#555" stroke-width="0.9" rx="0.4" />
<line x1="941.00" y1="47.60" x2="941.00" y2="58.40" stroke="#555" stroke-width="0.7" />
<line x1="931.60" y1="50.60" x2="941.00" y2="50.60" stroke="#555" stroke-width="0.6" />
<path d="M933.4 43.8 h3.4 l-1.5 3.6 h2.3 l-5.4 7 l1.4 -4.8 h-2z" fill="#f5a742" stroke="#fdfdfe" stroke-width="0.4" />
<text x="932.60" y="66.20" textLength="9.80" lengthAdjust="spacingAndGlyphs" font-size="7.12" fill="#2f2f2f" font-weight="400" dominant-baseline="central" >デザ</text>
<text x="930.60" y="74.20" textLength="13.80" lengthAdjust="spacingAndGlyphs" font-size="7.12" fill="#2f2f2f" font-weight="400" dominant-baseline="central" >イナー</text>
<path d="M986.70 85.15 L988.80 87.25 L990.90 85.15" fill="none" stroke="#333" stroke-width="0.9"/>
<rect x="18.65" y="102.05" width="117.90" height="67.40" fill="#fff" stroke="#c8441f" stroke-width="1.3" rx="2.8" />
<rect x="19.80" y="103.30" width="115.70" height="65.00" fill="#054d20" stroke="none" stroke-width="0.8" rx="1.8" />
<rect x="22.80" y="106.30" width="109.70" height="59.00" fill="none" stroke="#b9c9bb" stroke-width="0.25" rx="0" />
<rect x="23.30" y="106.80" width="108.80" height="58.00" fill="#fff" stroke="none" stroke-width="0.8" rx="0" />
<g transform="translate(19.80 103.30) scale(0.1658) translate(-226 -100)"><polygon points="280.4,115.2 298.1,135.3 256.9,170.5 239,150.4" fill="#1c1c1c"/><polygon points="298.1,135.3 256.9,170.5 252.8,165.9 294,130.7" fill="#5a5a5a"/><path d="M265.6 159.2 L247.2 126.6 C241.4 126.6 237.4 122.6 238 118.2 C238.8 112 245 107.8 252 107.7 C257.6 107.6 259.6 112.4 257 118.8 L287.6 144.2" fill="none" stroke="#d8d8d8" stroke-width="3.2" stroke-linejoin="round"/></g>
<text x="9.00" y="105.65" text-anchor="middle" font-size="8.8" fill="#c8441f" font-weight="400" dominant-baseline="central" >1</text>
<line x1="51.70" y1="121.50" x2="66.80" y2="121.50" stroke="#4a4f4a" stroke-width="0.4" />
<line x1="88.00" y1="121.50" x2="102.70" y2="121.50" stroke="#4a4f4a" stroke-width="0.4" />
<text x="69.20" y="121.40" textLength="16.60" lengthAdjust="spacingAndGlyphs" font-size="2.8" fill="#444" font-weight="700" dominant-baseline="central" >[ REPORT ]</text>
<text x="58.20" y="128.30" textLength="38.20" lengthAdjust="spacing" font-size="6" fill="#444" font-weight="500" dominant-baseline="central" >プロジェクト</text>
<text x="60.60" y="136.90" textLength="34.00" lengthAdjust="spacingAndGlyphs" font-size="6.7" fill="#3a3a3a" font-weight="700" dominant-baseline="central" >進捗報告書</text>
<line x1="51.70" y1="145.10" x2="102.70" y2="145.10" stroke="#b8b8b8" stroke-width="1.0" />
<text x="69.90" y="149.60" textLength="15.80" lengthAdjust="spacingAndGlyphs" font-size="3" fill="#222" font-weight="700" dominant-baseline="central" >DOGDOGLAB</text>
<text x="68.50" y="153.30" textLength="17.90" lengthAdjust="spacingAndGlyphs" font-size="3" fill="#222" font-weight="700" dominant-baseline="central" >2025年 7月 15日</text>
<rect x="19.20" y="179.00" width="116.20" height="65.30" fill="none" stroke="#f6f7f9" stroke-width="1" rx="2.2" />
<rect x="19.70" y="179.50" width="115.20" height="64.30" fill="#054d20" stroke="none" stroke-width="0.8" rx="1.8" />
<rect x="22.70" y="182.50" width="109.20" height="58.30" fill="none" stroke="#b9c9bb" stroke-width="0.25" rx="0" />
<rect x="23.20" y="183.00" width="108.30" height="57.30" fill="#fff" stroke="none" stroke-width="0.8" rx="0" />
<g transform="translate(19.70 179.50) scale(0.1650) translate(-226 -100)"><polygon points="280.4,115.2 298.1,135.3 256.9,170.5 239,150.4" fill="#1c1c1c"/><polygon points="298.1,135.3 256.9,170.5 252.8,165.9 294,130.7" fill="#5a5a5a"/><path d="M265.6 159.2 L247.2 126.6 C241.4 126.6 237.4 122.6 238 118.2 C238.8 112 245 107.8 252 107.7 C257.6 107.6 259.6 112.4 257 118.8 L287.6 144.2" fill="none" stroke="#d8d8d8" stroke-width="3.2" stroke-linejoin="round"/></g>
<text x="9.00" y="181.85" text-anchor="middle" font-size="8.8" fill="#505050" font-weight="400" dominant-baseline="central" >2</text>
<line x1="30.00" y1="190.80" x2="70.60" y2="190.80" stroke="#777" stroke-width="1.3" />
<line x1="84.30" y1="190.80" x2="124.90" y2="190.80" stroke="#777" stroke-width="1.3" />
<text x="71.80" y="190.40" textLength="11.60" lengthAdjust="spacingAndGlyphs" font-size="3.2" fill="#444" font-weight="700" dominant-baseline="central" >[ 目次 ]</text>
<rect x="45.70" y="199.00" width="6.10" height="6.00" fill="#1e1e1e" stroke="none" stroke-width="0.8" rx="0" />
<rect x="47.60" y="201.10" width="2.30" height="1.70" fill="#c4c4c4" stroke="none" stroke-width="0.8" rx="0" />
<text x="55.00" y="200.40" textLength="22.80" lengthAdjust="spacingAndGlyphs" font-size="2.9" fill="#222" font-weight="700" dominant-baseline="central" >プロジェクト概要</text>
<text x="55.00" y="204.10" textLength="25.30" lengthAdjust="spacingAndGlyphs" font-size="1.9" fill="#555" font-weight="400" dominant-baseline="central" >プロジェクトの目的と背景</text>
<rect x="45.70" y="207.60" width="6.10" height="6.00" fill="#1e1e1e" stroke="none" stroke-width="0.8" rx="0" />
<rect x="47.60" y="209.70" width="2.30" height="1.70" fill="#c4c4c4" stroke="none" stroke-width="0.8" rx="0" />
<text x="55.00" y="209.00" textLength="25.30" lengthAdjust="spacingAndGlyphs" font-size="2.9" fill="#222" font-weight="700" dominant-baseline="central" >各セクションの進捗</text>
<text x="55.00" y="212.70" textLength="25.00" lengthAdjust="spacingAndGlyphs" font-size="1.9" fill="#555" font-weight="400" dominant-baseline="central" >進捗の確認・スケジュール</text>
<rect x="45.70" y="216.40" width="6.10" height="6.00" fill="#1e1e1e" stroke="none" stroke-width="0.8" rx="0" />
<rect x="47.60" y="218.50" width="2.30" height="1.70" fill="#c4c4c4" stroke="none" stroke-width="0.8" rx="0" />
<text x="55.00" y="217.80" textLength="22.80" lengthAdjust="spacingAndGlyphs" font-size="2.9" fill="#222" font-weight="700" dominant-baseline="central" >今後の予定と展望</text>
<text x="55.00" y="221.50" textLength="16.60" lengthAdjust="spacingAndGlyphs" font-size="1.9" fill="#555" font-weight="400" dominant-baseline="central" >今後の計画と展望</text>
<rect x="45.70" y="225.20" width="6.10" height="6.00" fill="#1e1e1e" stroke="none" stroke-width="0.8" rx="0" />
<rect x="47.60" y="227.30" width="2.30" height="1.70" fill="#c4c4c4" stroke="none" stroke-width="0.8" rx="0" />
<text x="55.00" y="226.60" textLength="7.50" lengthAdjust="spacingAndGlyphs" font-size="2.9" fill="#222" font-weight="700" dominant-baseline="central" >まとめ</text>
<text x="55.00" y="230.30" textLength="27.20" lengthAdjust="spacingAndGlyphs" font-size="1.9" fill="#555" font-weight="400" dominant-baseline="central" >全体の進捗状況とメッセージ</text>
<rect x="94.40" y="209.70" width="14.60" height="9.60" fill="#fff" stroke="#c9c9c9" stroke-width="0.4" rx="0.8" />
<circle cx="97.60" cy="213.20" r="1.60" fill="#222" stroke="none" stroke-width="0.8"/>
<rect x="97.00" y="214.60" width="1.20" height="1.60" fill="#222" stroke="none" stroke-width="0.8" rx="0" />
<rect x="103.00" y="212.60" width="1.20" height="3.60" fill="#555" stroke="none" stroke-width="0.8" rx="0" />
<rect x="105.20" y="213.80" width="1.00" height="2.40" fill="#555" stroke="none" stroke-width="0.8" rx="0" />
<path d="M101.6 222.2 c1 -1 2 -1.4 2.8 -0.4" fill="none" stroke="#888" stroke-width="0.4" />
<circle cx="114.60" cy="217.20" r="2.50" fill="#f3f3f3" stroke="#333" stroke-width="0.4"/>
<path d="M112.2 216.4 c0.4 -2.6 4.2 -3 5 -0.4 c-1.2 -0.6 -3.4 -0.6 -5 0.4z" fill="#1e1e1e" stroke="none" stroke-width="0.8" />
<path d="M108.6 240.6 l1 -14 c0.4 -3 2.6 -4.6 5 -4.6 c3.4 0 5.6 1.4 6.6 4.6 l3.6 10 l-2.4 4z" fill="#1e1e1e" stroke="none" stroke-width="0.8" />
<path d="M113.4 222.4 l1.4 2 l1.6 -2 l-0.2 8 l-2.6 0z" fill="#fff" stroke="none" stroke-width="0.8" />
<path d="M108.8 228 l-5 2 l-0.6 -3.4" fill="none" stroke="#1e1e1e" stroke-width="1.5" stroke-linejoin="round"/>
<rect x="114.60" y="227.60" width="6.60" height="8.60" fill="#f6f6f6" stroke="#333" stroke-width="0.4" rx="0" transform="rotate(-8 118 232)"/>
<line x1="115.60" y1="230.40" x2="120.40" y2="229.80" stroke="#555" stroke-width="0.4" />
<line x1="115.80" y1="232.40" x2="120.60" y2="231.80" stroke="#555" stroke-width="0.4" />
<rect x="19.20" y="255.00" width="116.20" height="65.30" fill="none" stroke="#f6f7f9" stroke-width="1" rx="2.2" />
<rect x="19.70" y="255.50" width="115.20" height="64.30" fill="#054d20" stroke="none" stroke-width="0.8" rx="1.8" />
<rect x="22.70" y="258.50" width="109.20" height="58.30" fill="none" stroke="#b9c9bb" stroke-width="0.25" rx="0" />
<rect x="23.20" y="259.00" width="108.30" height="57.30" fill="#fff" stroke="none" stroke-width="0.8" rx="0" />
<g transform="translate(19.70 255.50) scale(0.1650) translate(-226 -100)"><polygon points="280.4,115.2 298.1,135.3 256.9,170.5 239,150.4" fill="#1c1c1c"/><polygon points="298.1,135.3 256.9,170.5 252.8,165.9 294,130.7" fill="#5a5a5a"/><path d="M265.6 159.2 L247.2 126.6 C241.4 126.6 237.4 122.6 238 118.2 C238.8 112 245 107.8 252 107.7 C257.6 107.6 259.6 112.4 257 118.8 L287.6 144.2" fill="none" stroke="#d8d8d8" stroke-width="3.2" stroke-linejoin="round"/></g>
<text x="9.00" y="257.85" text-anchor="middle" font-size="8.8" fill="#505050" font-weight="400" dominant-baseline="central" >3</text>
<line x1="51.70" y1="278.50" x2="102.70" y2="278.50" stroke="#b4b4b4" stroke-width="0.8" />
<rect x="73.50" y="274.20" width="6.30" height="6.30" fill="#1e1e1e" stroke="none" stroke-width="0.8" rx="0.3" />
<rect x="75.40" y="276.00" width="2.50" height="2.00" fill="#ddd" stroke="none" stroke-width="0.8" rx="0" />
<text x="56.60" y="286.30" textLength="43.00" lengthAdjust="spacing" font-size="4.7" fill="#3a3a3a" font-weight="700" dominant-baseline="central" >プロジェクト概要</text>
<text x="65.00" y="291.40" textLength="25.20" lengthAdjust="spacingAndGlyphs" font-size="2" fill="#444" font-weight="400" dominant-baseline="central" >プロジェクトの目的と背景</text>
<line x1="51.70" y1="297.40" x2="102.70" y2="297.40" stroke="#555" stroke-width="0.5" />
<rect x="19.20" y="331.00" width="116.20" height="65.30" fill="none" stroke="#f6f7f9" stroke-width="1" rx="2.2" />
<rect x="19.70" y="331.50" width="115.20" height="64.30" fill="#054d20" stroke="none" stroke-width="0.8" rx="1.8" />
<rect x="22.70" y="334.50" width="109.20" height="58.30" fill="none" stroke="#b9c9bb" stroke-width="0.25" rx="0" />
<rect x="23.20" y="335.00" width="108.30" height="57.30" fill="#fff" stroke="none" stroke-width="0.8" rx="0" />
<g transform="translate(19.70 331.50) scale(0.1650) translate(-226 -100)"><polygon points="280.4,115.2 298.1,135.3 256.9,170.5 239,150.4" fill="#1c1c1c"/><polygon points="298.1,135.3 256.9,170.5 252.8,165.9 294,130.7" fill="#5a5a5a"/><path d="M265.6 159.2 L247.2 126.6 C241.4 126.6 237.4 122.6 238 118.2 C238.8 112 245 107.8 252 107.7 C257.6 107.6 259.6 112.4 257 118.8 L287.6 144.2" fill="none" stroke="#d8d8d8" stroke-width="3.2" stroke-linejoin="round"/></g>
<text x="9.00" y="333.85" text-anchor="middle" font-size="8.8" fill="#505050" font-weight="400" dominant-baseline="central" >4</text>
<line x1="30.00" y1="343.30" x2="61.80" y2="343.30" stroke="#2a2a2a" stroke-width="1.0" />
<line x1="93.10" y1="343.30" x2="125.20" y2="343.30" stroke="#2a2a2a" stroke-width="1.0" />
<text x="63.00" y="343.20" textLength="28.80" lengthAdjust="spacingAndGlyphs" font-size="2.8" fill="#555" font-weight="700" dominant-baseline="central" >[ プロジェクト概要 ]</text>
<text x="31.30" y="357.80" textLength="34.20" lengthAdjust="spacing" font-size="3.3" fill="#555" font-weight="500" dominant-baseline="central" >マーケティング施策の</text>
<text x="31.30" y="362.90" textLength="27.30" lengthAdjust="spacing" font-size="3.3" fill="#555" font-weight="500" dominant-baseline="central" >概要と効果の計測</text>
<text x="31.30" y="368.10" textLength="34.20" lengthAdjust="spacingAndGlyphs" font-size="1.9" fill="#555" font-weight="400" dominant-baseline="central" >新プロジェクトは、若年層の消費者への商品の</text>
<text x="31.30" y="371.70" textLength="34.20" lengthAdjust="spacingAndGlyphs" font-size="1.9" fill="#555" font-weight="400" dominant-baseline="central" >認知度向上とブランドイメージの向上を目的と</text>
<text x="31.30" y="375.10" textLength="34.20" lengthAdjust="spacingAndGlyphs" font-size="1.9" fill="#555" font-weight="400" dominant-baseline="central" >したマーケティング施策の実施・運</text>
<text x="31.30" y="378.60" textLength="12.70" lengthAdjust="spacingAndGlyphs" font-size="1.9" fill="#555" font-weight="400" dominant-baseline="central" >用を行います。</text>
<path d="M70.4 365.6 l2.6 2.9 l-2.6 2.9 M73.6 365.6 l2.6 2.9 l-2.6 2.9" fill="none" stroke="#b0b0b0" stroke-width="0.5" />
<rect x="81.10" y="354.20" width="5.80" height="28.40" fill="#fff" stroke="#333" stroke-width="0.5" rx="0" />
<text x="84" y="368.4" font-size="1.8" fill="#444" text-anchor="middle" dominant-baseline="central" style="writing-mode:vertical-rl" textLength="13" lengthAdjust="spacing">施策の主な目標</text>
<circle cx="92.40" cy="359.60" r="2.40" fill="#1e1e1e" stroke="none" stroke-width="0.8"/>
<path d="M91.2 359.6 l0.9 0.9 l1.6 -1.8" fill="none" stroke="#fff" stroke-width="0.5" />
<text x="97.10" y="358.20" textLength="18.90" lengthAdjust="spacingAndGlyphs" font-size="1.8" fill="#444" font-weight="400" dominant-baseline="central" >商品の認知度向上をめざしたSNS</text>
<text x="97.10" y="361.10" textLength="14.90" lengthAdjust="spacingAndGlyphs" font-size="1.8" fill="#444" font-weight="400" dominant-baseline="central" >広告をおこないます。</text>
<circle cx="92.40" cy="367.80" r="2.40" fill="#1e1e1e" stroke="none" stroke-width="0.8"/>
<path d="M91.2 367.8 l0.9 0.9 l1.6 -1.8" fill="none" stroke="#fff" stroke-width="0.5" />
<text x="97.10" y="366.40" textLength="18.90" lengthAdjust="spacingAndGlyphs" font-size="1.8" fill="#444" font-weight="400" dominant-baseline="central" >ブランド価値を高め</text>
<text x="97.10" y="369.30" textLength="14.90" lengthAdjust="spacingAndGlyphs" font-size="1.8" fill="#444" font-weight="400" dominant-baseline="central" >顧客満足度を向上</text>
<circle cx="92.40" cy="376.20" r="2.40" fill="#1e1e1e" stroke="none" stroke-width="0.8"/>
<path d="M91.2 376.2 l0.9 0.9 l1.6 -1.8" fill="none" stroke="#fff" stroke-width="0.5" />
<text x="97.10" y="374.80" textLength="18.90" lengthAdjust="spacingAndGlyphs" font-size="1.8" fill="#444" font-weight="400" dominant-baseline="central" >新規顧客の獲得数を月10パー</text>
<text x="97.10" y="377.70" textLength="14.90" lengthAdjust="spacingAndGlyphs" font-size="1.8" fill="#444" font-weight="400" dominant-baseline="central" >セント増加させる見込み</text>
<rect x="19.20" y="407.00" width="116.20" height="65.30" fill="none" stroke="#f6f7f9" stroke-width="1" rx="2.2" />
<rect x="19.70" y="407.50" width="115.20" height="64.30" fill="#054d20" stroke="none" stroke-width="0.8" rx="1.8" />
<rect x="22.70" y="410.50" width="109.20" height="58.30" fill="none" stroke="#b9c9bb" stroke-width="0.25" rx="0" />
<rect x="23.20" y="411.00" width="108.30" height="57.30" fill="#fff" stroke="none" stroke-width="0.8" rx="0" />
<g transform="translate(19.70 407.50) scale(0.1650) translate(-226 -100)"><polygon points="280.4,115.2 298.1,135.3 256.9,170.5 239,150.4" fill="#1c1c1c"/><polygon points="298.1,135.3 256.9,170.5 252.8,165.9 294,130.7" fill="#5a5a5a"/><path d="M265.6 159.2 L247.2 126.6 C241.4 126.6 237.4 122.6 238 118.2 C238.8 112 245 107.8 252 107.7 C257.6 107.6 259.6 112.4 257 118.8 L287.6 144.2" fill="none" stroke="#d8d8d8" stroke-width="3.2" stroke-linejoin="round"/></g>
<text x="9.00" y="409.85" text-anchor="middle" font-size="8.8" fill="#505050" font-weight="400" dominant-baseline="central" >5</text>
<line x1="30.00" y1="418.90" x2="54.60" y2="418.90" stroke="#777" stroke-width="1.3" />
<line x1="100.30" y1="418.90" x2="124.90" y2="418.90" stroke="#777" stroke-width="1.3" />
<text x="56.20" y="418.60" textLength="42.50" lengthAdjust="spacingAndGlyphs" font-size="2.8" fill="#555" font-weight="700" dominant-baseline="central" >[ プロジェクトの具体的な内容 ]</text>
<circle cx="45.70" cy="435.60" r="8.00" fill="#eef0f2" stroke="none" stroke-width="0.8"/>
<rect x="40.70" y="431.00" width="10.00" height="8.40" fill="none" stroke="#2a2a2a" stroke-width="0.9" rx="0.4" />
<rect x="42.10" y="432.40" width="3.40" height="2.60" fill="#2a2a2a" stroke="none" stroke-width="0.8" rx="0" />
<line x1="46.30" y1="433.00" x2="49.30" y2="433.00" stroke="#2a2a2a" stroke-width="0.6" />
<line x1="42.10" y1="436.60" x2="49.30" y2="436.60" stroke="#2a2a2a" stroke-width="0.6" />
<rect x="46.10" y="434.60" width="3.40" height="3.40" fill="#444" stroke="none" stroke-width="0.8" rx="0" />
<text x="35.60" y="448.20" textLength="21.40" lengthAdjust="spacingAndGlyphs" font-size="2.7" fill="#222" font-weight="700" dominant-baseline="central" >市場の分析と調査</text>
<text x="32.10" y="453.30" textLength="26.50" lengthAdjust="spacingAndGlyphs" font-size="1.9" fill="#555" font-weight="400" dominant-baseline="central" >ターゲット層のニーズを把握</text>
<text x="32.10" y="456.80" textLength="26.50" lengthAdjust="spacingAndGlyphs" font-size="1.9" fill="#555" font-weight="400" dominant-baseline="central" >し、ターゲット層に合わせたキ</text>
<text x="32.10" y="460.20" textLength="14.58" lengthAdjust="spacingAndGlyphs" font-size="1.9" fill="#555" font-weight="400" dominant-baseline="central" >ャンペーンを展開します。</text>
<circle cx="77.40" cy="435.60" r="8.00" fill="#eef0f2" stroke="none" stroke-width="0.8"/>
<rect x="72.40" y="431.00" width="10.00" height="8.40" fill="none" stroke="#2a2a2a" stroke-width="0.9" rx="0.4" />
<rect x="73.80" y="432.40" width="3.40" height="2.60" fill="#2a2a2a" stroke="none" stroke-width="0.8" rx="0" />
<line x1="78.00" y1="433.00" x2="81.00" y2="433.00" stroke="#2a2a2a" stroke-width="0.6" />
<line x1="73.80" y1="436.60" x2="81.00" y2="436.60" stroke="#2a2a2a" stroke-width="0.6" />
<rect x="77.80" y="434.60" width="3.40" height="3.40" fill="#444" stroke="none" stroke-width="0.8" rx="0" />
<text x="68.70" y="448.20" textLength="18.00" lengthAdjust="spacingAndGlyphs" font-size="2.7" fill="#222" font-weight="700" dominant-baseline="central" >コンテンツ制作</text>
<text x="63.90" y="453.30" textLength="26.30" lengthAdjust="spacingAndGlyphs" font-size="1.9" fill="#555" font-weight="400" dominant-baseline="central" >ターゲット層が興味をもちそうなコ</text>
<text x="63.90" y="456.80" textLength="26.30" lengthAdjust="spacingAndGlyphs" font-size="1.9" fill="#555" font-weight="400" dominant-baseline="central" >ンテンツを制作し、最適なタイ</text>
<text x="63.90" y="460.20" textLength="14.47" lengthAdjust="spacingAndGlyphs" font-size="1.9" fill="#555" font-weight="400" dominant-baseline="central" >ミングで配信します。</text>
<circle cx="108.80" cy="435.60" r="8.00" fill="#eef0f2" stroke="none" stroke-width="0.8"/>
<rect x="103.80" y="431.00" width="10.00" height="8.40" fill="none" stroke="#2a2a2a" stroke-width="0.9" rx="0.4" />
<rect x="105.20" y="432.40" width="3.40" height="2.60" fill="#2a2a2a" stroke="none" stroke-width="0.8" rx="0" />
<line x1="109.40" y1="433.00" x2="112.40" y2="433.00" stroke="#2a2a2a" stroke-width="0.6" />
<line x1="105.20" y1="436.60" x2="112.40" y2="436.60" stroke="#2a2a2a" stroke-width="0.6" />
<rect x="109.20" y="434.60" width="3.40" height="3.40" fill="#444" stroke="none" stroke-width="0.8" rx="0" />
<text x="97.40" y="448.20" textLength="23.50" lengthAdjust="spacingAndGlyphs" font-size="2.7" fill="#222" font-weight="700" dominant-baseline="central" >デジタル広告の運用</text>
<text x="95.00" y="453.30" textLength="27.00" lengthAdjust="spacingAndGlyphs" font-size="1.9" fill="#555" font-weight="400" dominant-baseline="central" >広告を出稿して、ターゲット層へ</text>
<text x="95.00" y="456.80" textLength="27.00" lengthAdjust="spacingAndGlyphs" font-size="1.9" fill="#555" font-weight="400" dominant-baseline="central" >の認知度向上とリーチ向上をはか</text>
<text x="95.00" y="460.20" textLength="14.85" lengthAdjust="spacingAndGlyphs" font-size="1.9" fill="#555" font-weight="400" dominant-baseline="central" >ります。</text>
<rect x="19.20" y="483.30" width="116.20" height="65.30" fill="none" stroke="#f6f7f9" stroke-width="1" rx="2.2" />
<rect x="19.70" y="483.80" width="115.20" height="64.30" fill="#054d20" stroke="none" stroke-width="0.8" rx="1.8" />
<rect x="22.70" y="486.80" width="109.20" height="58.30" fill="none" stroke="#b9c9bb" stroke-width="0.25" rx="0" />
<rect x="23.20" y="487.30" width="108.30" height="57.30" fill="#fff" stroke="none" stroke-width="0.8" rx="0" />
<g transform="translate(19.70 483.80) scale(0.1650) translate(-226 -100)"><polygon points="280.4,115.2 298.1,135.3 256.9,170.5 239,150.4" fill="#1c1c1c"/><polygon points="298.1,135.3 256.9,170.5 252.8,165.9 294,130.7" fill="#5a5a5a"/><path d="M265.6 159.2 L247.2 126.6 C241.4 126.6 237.4 122.6 238 118.2 C238.8 112 245 107.8 252 107.7 C257.6 107.6 259.6 112.4 257 118.8 L287.6 144.2" fill="none" stroke="#d8d8d8" stroke-width="3.2" stroke-linejoin="round"/></g>
<text x="9.00" y="486.15" text-anchor="middle" font-size="8.8" fill="#505050" font-weight="400" dominant-baseline="central" >6</text>
<line x1="51.70" y1="507.00" x2="102.70" y2="507.00" stroke="#b4b4b4" stroke-width="0.8" />
<rect x="73.50" y="502.60" width="6.30" height="6.20" fill="#1e1e1e" stroke="none" stroke-width="0.8" rx="0.3" />
<rect x="75.40" y="504.40" width="2.50" height="2.00" fill="#ddd" stroke="none" stroke-width="0.8" rx="0" />
<text x="53.40" y="514.30" textLength="48.40" lengthAdjust="spacing" font-size="4.7" fill="#3a3a3a" font-weight="700" dominant-baseline="central" >各セクションの進捗</text>
<text x="65.00" y="519.60" textLength="24.90" lengthAdjust="spacingAndGlyphs" font-size="2" fill="#444" font-weight="400" dominant-baseline="central" >進捗の確認・スケジュール</text>
<line x1="51.70" y1="525.10" x2="102.70" y2="525.10" stroke="#555" stroke-width="0.5" />
<rect x="149.00" y="102.20" width="5.00" height="165.60" fill="#787878" stroke="none" stroke-width="0.8" rx="2.5" />
<path d="M149.2 99 l2.3 -2.8 l2.3 2.8z" fill="#666" stroke="none" stroke-width="0.8" />
<path d="M149.2 519.6 l2.3 2.8 l2.3 -2.8z" fill="#666" stroke="none" stroke-width="0.8" />
<rect x="225.60" y="99.60" width="699.20" height="393.60" fill="none" stroke="#f4f6f8" stroke-width="0.9" rx="0" />
<line x1="924.25" y1="100.00" x2="924.25" y2="493.00" stroke="#054d20" stroke-width="0.5" />
<line x1="243.90" y1="119.15" x2="907.00" y2="119.15" stroke="#d6d9d6" stroke-width="1.6" />
<line x1="244.60" y1="118.40" x2="244.60" y2="476.00" stroke="#d6d9d6" stroke-width="1.4" />
<line x1="906.50" y1="118.40" x2="906.50" y2="476.00" stroke="#d6d9d6" stroke-width="1.1" />
<line x1="243.90" y1="475.50" x2="907.00" y2="475.50" stroke="#d6d9d6" stroke-width="1.1" />
<g id="clip">
<polygon points="280.4,115.2 298.1,135.3 256.9,170.5 239,150.4" fill="#222"/>
<polygon points="298.1,135.3 256.9,170.5 252.8,165.9 294,130.7" fill="#6e6e6e"/>
<path d="M265.6 159.2 L247.2 126.6 C241.4 126.6 237.4 122.6 238 118.2 C238.8 112 245 107.8 252 107.7 C257.6 107.6 259.6 112.4 257 118.8 L287.6 144.2" fill="none" stroke="#cbcbcb" stroke-width="2.2" stroke-linejoin="round"/>
</g>
<line x1="418.60" y1="208.90" x2="515.00" y2="208.90" stroke="#222" stroke-width="1.9" />
<line x1="635.00" y1="208.90" x2="732.00" y2="208.90" stroke="#222" stroke-width="1.9" />
<line x1="418.60" y1="352.50" x2="732.00" y2="352.50" stroke="#222" stroke-width="1.9" />
<text transform="translate(523.4 0) scale(0.9 1)" x="0" y="208" textLength="115.2" lengthAdjust="spacing" font-size="18.6" fill="#222" font-weight="700" dominant-baseline="central">[ REPORT ]</text>
<text transform="translate(458.6 0) scale(0.87 1)" x="0" y="250.4" textLength="268.5" lengthAdjust="spacing" font-size="36.5" fill="#222" stroke="#222" stroke-width="0.7" stroke-linejoin="round" font-weight="500" dominant-baseline="central">プロジェクト</text>
<text x="473.8" y="303.4" textLength="207.6" lengthAdjust="spacing" font-size="41" fill="#222" font-weight="700" dominant-baseline="central">進捗報告<tspan font-weight="500">書</tspan></text>
<text x="530.80" y="380.40" textLength="93.80" lengthAdjust="spacingAndGlyphs" font-size="15.2" fill="#222" font-weight="700" dominant-baseline="central" >DOGDOGLAB</text>
<text x="520.80" y="401.40" textLength="108.00" lengthAdjust="spacingAndGlyphs" font-size="15.2" fill="#222" font-weight="700" dominant-baseline="central" >2025年 7月 15日</text>
<rect x="451.80" y="228.90" width="247.30" height="101.00" fill="none" stroke="#8a8a8a" stroke-width="0.7" rx="0" stroke-dasharray="1.3 0.7"/>
<line x1="575.60" y1="214.80" x2="575.60" y2="226.40" stroke="#777" stroke-width="0.6" />
<circle cx="451.80" cy="228.90" r="2.55" fill="#fff" stroke="#5a5a5a" stroke-width="0.75"/>
<circle cx="451.80" cy="279.40" r="2.55" fill="#fff" stroke="#5a5a5a" stroke-width="0.75"/>
<circle cx="451.80" cy="329.90" r="2.55" fill="#fff" stroke="#5a5a5a" stroke-width="0.75"/>
<circle cx="575.50" cy="228.90" r="2.55" fill="#fff" stroke="#5a5a5a" stroke-width="0.75"/>
<circle cx="575.50" cy="329.90" r="2.55" fill="#fff" stroke="#5a5a5a" stroke-width="0.75"/>
<circle cx="699.10" cy="228.90" r="2.55" fill="#fff" stroke="#5a5a5a" stroke-width="0.75"/>
<circle cx="699.10" cy="279.40" r="2.55" fill="#fff" stroke="#5a5a5a" stroke-width="0.75"/>
<circle cx="699.10" cy="329.90" r="2.55" fill="#fff" stroke="#5a5a5a" stroke-width="0.75"/>
<circle cx="575.20" cy="210.70" r="3.30" fill="none" stroke="#fff" stroke-width="2.4"/>
<path d="M578.9 208.2 A4.4 4.4 0 1 0 579.5 211.6" fill="none" stroke="#555" stroke-width="0.85" />
<path d="M577 209.3 A2.3 2.3 0 1 0 577.5 211.1" fill="none" stroke="#555" stroke-width="0.85" />
<path d="M576.6 208.2 l2.4 0.4 l-0.2 2.6 M579.2 211.6 l-1.8 -0.5" fill="none" stroke="#444" stroke-width="0.8" />
<line x1="639.20" y1="273.00" x2="639.20" y2="327.80" stroke="#9a9a9a" stroke-width="0.7" />
<rect x="993.90" y="102.30" width="4.70" height="25.50" fill="#787878" stroke="none" stroke-width="0.8" rx="2.3" />
<path d="M994 99 l2.3 -2.8 l2.3 2.8z" fill="#666" stroke="none" stroke-width="0.8" />
<path d="M994 467.8 l2.3 2.8 l2.3 -2.8z" fill="#666" stroke="none" stroke-width="0.8" />
<path d="M994 477.4 l2.3 -2.4 l2.3 2.4z M994 479.6 l2.3 -2.4 l2.3 2.4z" fill="#666" stroke="none" stroke-width="0.8" />
<path d="M994 483.6 l2.3 2.4 l2.3 -2.4z M994 485.8 l2.3 2.4 l2.3 -2.4z" fill="#666" stroke="none" stroke-width="0.8" />
<text x="163.40" y="510.40" textLength="37.60" lengthAdjust="spacingAndGlyphs" font-size="6.6" fill="#555" font-weight="400" dominant-baseline="central" >ノートを入力</text>
<rect x="0.00" y="526.20" width="1000.00" height="9.80" fill="#f3f3f3" stroke="none" stroke-width="0.8" rx="0" />
<text x="6.10" y="531.60" textLength="19.50" lengthAdjust="spacingAndGlyphs" font-size="6.6" fill="#444" font-weight="400" dominant-baseline="central" >スライド</text>
<text x="27.20" y="531.70" textLength="12.20" lengthAdjust="spacingAndGlyphs" font-size="6.9" fill="#444" font-weight="400" dominant-baseline="central" >1/14</text>
<text x="57.00" y="531.60" textLength="32.20" lengthAdjust="spacingAndGlyphs" font-size="6.6" fill="#444" font-weight="400" dominant-baseline="central" >英語 (米国)</text>
<circle cx="100.60" cy="529.00" r="0.80" fill="#444" stroke="none" stroke-width="0.8"/>
<path d="M98 530.6 h5.2 M100.6 530.6 v2 M100.6 532.6 l-1.4 2.4 M100.6 532.6 l1.4 2.4" fill="none" stroke="#444" stroke-width="0.6" />
<path d="M101.6 533.6 l1 1 l1.8 -2" fill="none" stroke="#444" stroke-width="0.5" />
<text x="106.80" y="531.60" textLength="77.20" lengthAdjust="spacingAndGlyphs" font-size="6.6" fill="#444" font-weight="400" dominant-baseline="central" >アクセシビリティ: 問題ありません</text>
<line x1="778.80" y1="530.00" x2="784.40" y2="530.00" stroke="#444" stroke-width="0.6" />
<line x1="778.80" y1="531.60" x2="784.40" y2="531.60" stroke="#444" stroke-width="0.6" />
<line x1="778.80" y1="533.20" x2="784.40" y2="533.20" stroke="#444" stroke-width="0.6" />
<path d="M779.6 528.6 l2 -1.4 l2 1.4" fill="none" stroke="#444" stroke-width="0.5" />
<text x="787.00" y="531.60" textLength="15.00" lengthAdjust="spacingAndGlyphs" font-size="6.6" fill="#444" font-weight="400" dominant-baseline="central" >ノート</text>
<rect x="811.60" y="526.40" width="20.60" height="9.60" fill="#d9d9d9" stroke="none" stroke-width="0.8" rx="0" />
<rect x="817.80" y="528.60" width="7.40" height="5.80" fill="none" stroke="#444" stroke-width="0.6" rx="0" />
<rect x="819.40" y="530.00" width="4.20" height="3.00" fill="none" stroke="#444" stroke-width="0.5" rx="0" />
<rect x="839.80" y="528.60" width="2.40" height="2.40" fill="none" stroke="#444" stroke-width="0.5" rx="0.4" />
<rect x="839.80" y="532.00" width="2.40" height="2.40" fill="none" stroke="#444" stroke-width="0.5" rx="0.4" />
<rect x="843.20" y="528.60" width="2.40" height="2.40" fill="none" stroke="#444" stroke-width="0.5" rx="0.4" />
<rect x="843.20" y="532.00" width="2.40" height="2.40" fill="none" stroke="#444" stroke-width="0.5" rx="0.4" />
<rect x="859.60" y="528.60" width="6.80" height="5.80" fill="none" stroke="#444" stroke-width="0.6" rx="0" />
<line x1="863.00" y1="528.60" x2="863.00" y2="534.40" stroke="#444" stroke-width="0.5" />
<line x1="860.60" y1="530.40" x2="862.20" y2="530.40" stroke="#444" stroke-width="0.4" />
<line x1="863.80" y1="530.40" x2="865.40" y2="530.40" stroke="#444" stroke-width="0.4" />
<rect x="880.60" y="528.20" width="6.80" height="4.40" fill="none" stroke="#444" stroke-width="0.6" rx="0" />
<line x1="884.00" y1="532.60" x2="884.00" y2="534.60" stroke="#444" stroke-width="0.6" />
<line x1="882.20" y1="534.80" x2="885.80" y2="534.80" stroke="#444" stroke-width="0.6" />
<line x1="897.60" y1="531.60" x2="901.40" y2="531.60" stroke="#444" stroke-width="0.6" />
<line x1="905.40" y1="531.60" x2="956.60" y2="531.60" stroke="#8a8a8a" stroke-width="0.5" />
<rect x="921.80" y="528.80" width="1.70" height="5.60" fill="#444" stroke="none" stroke-width="0.8" rx="0" />
<line x1="931.00" y1="530.40" x2="931.00" y2="532.80" stroke="#666" stroke-width="0.5" />
<line x1="959.20" y1="531.60" x2="963.00" y2="531.60" stroke="#444" stroke-width="0.6" />
<line x1="961.10" y1="529.70" x2="961.10" y2="533.50" stroke="#444" stroke-width="0.6" />
<text x="970.00" y="531.60" textLength="12.60" lengthAdjust="spacingAndGlyphs" font-size="6.6" fill="#444" font-weight="400" dominant-baseline="central" >70%</text>
<rect x="991.40" y="529.20" width="5.00" height="4.80" fill="none" stroke="#444" stroke-width="0.6" rx="1" />
<path d="M993.9 527.6 v2.4 M993.9 533.2 v2.4 M989.8 531.6 h2.4 M995.6 531.6 h2.4" fill="none" stroke="#444" stroke-width="0.6" />
</svg>
</body></html>
